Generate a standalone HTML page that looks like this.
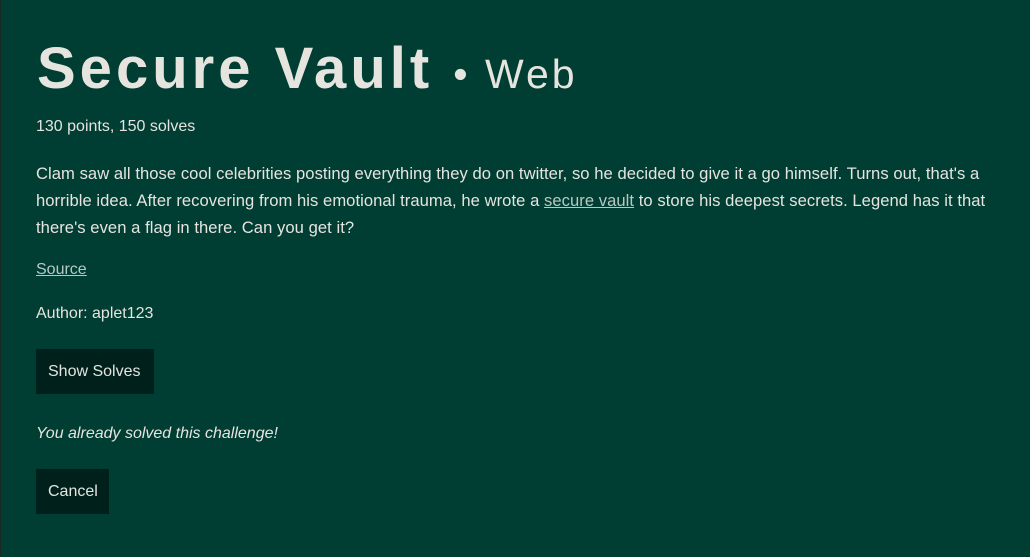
<!DOCTYPE html>
<html><head><style>
html,body{margin:0;padding:0;}
body{width:1030px;height:557px;background:#003d33;color:#e6e4df;font-family:"Liberation Sans",sans-serif;position:relative;overflow:hidden;border-left:1px solid #1a2a27;box-sizing:border-box;}
.a{position:absolute;left:35px;white-space:nowrap;}
h1{position:absolute;left:36px;top:34px;margin:0;font-size:58px;font-weight:bold;letter-spacing:4px;line-height:70px;white-space:nowrap;}
h1 .c{font-weight:normal;font-size:41px;letter-spacing:3px;}
.t{font-size:16px;}
a{color:#b9c8c2;text-decoration:underline;}
.btn{position:absolute;left:35px;background:#00211b;font-size:16px;line-height:45px;padding:0 12px;}
</style></head><body>
<h1>Secure Vault <span class="c">• Web</span></h1>
<div class="a t" style="top:118px">130 points, 150 solves</div>
<div class="a t" style="top:160px;line-height:27px;font-size:16.6px;letter-spacing:0.05px">Clam saw all those cool celebrities posting everything they do on twitter, so he decided to give it a go himself. Turns out, that's a<br>horrible idea. After recovering from his emotional trauma, he wrote a <a>secure vault</a> to store his deepest secrets. Legend has it that<br>there's even a flag in there. Can you get it?</div>
<div class="a t" style="top:261px"><a>Source</a></div>
<div class="a t" style="top:305px">Author: aplet123</div>
<div class="btn" style="top:349px;width:94px">Show Solves</div>
<div class="a t" style="top:425px;font-style:italic">You already solved this challenge!</div>
<div class="btn" style="top:469px;width:49px">Cancel</div>
</body></html>
